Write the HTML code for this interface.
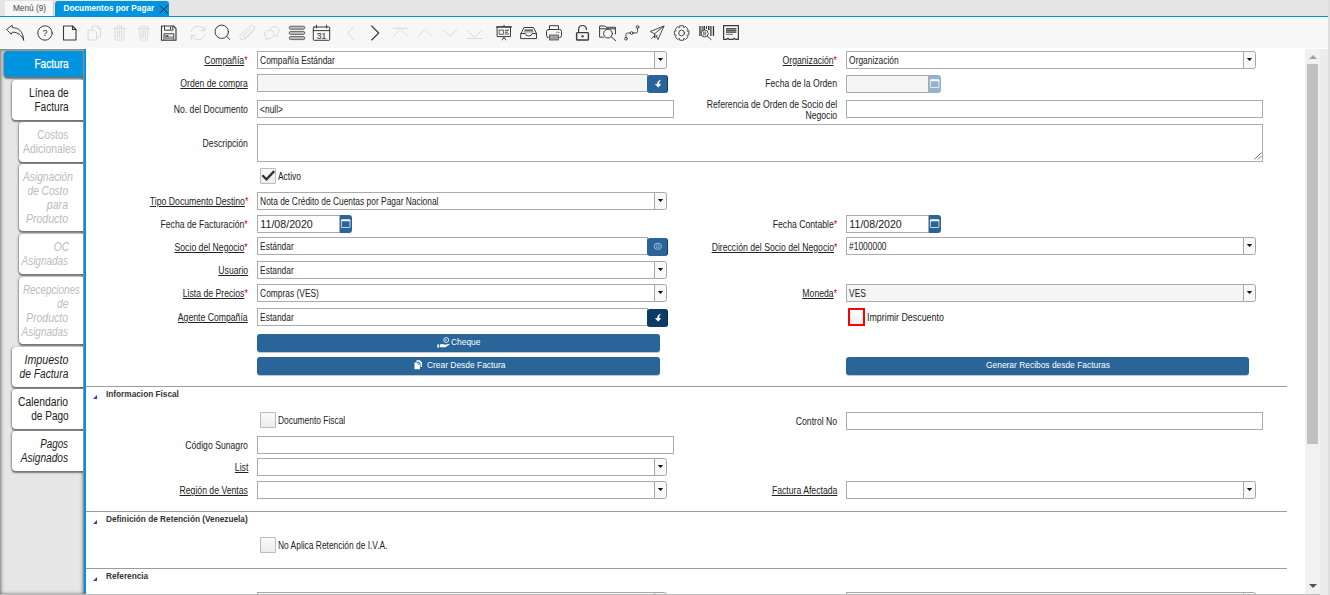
<!DOCTYPE html>
<html lang="es"><head><meta charset="utf-8"><title>Documentos por Pagar</title>
<style>
*{box-sizing:border-box}
html,body{margin:0;padding:0}
body{width:1330px;height:595px;overflow:hidden;background:#fff;position:relative;font-family:"Liberation Sans",sans-serif;color:#333}
.a{position:absolute}
#tabbar{left:0;top:0;width:1330px;height:16px;background:#e5e5e5}
#tabmenu{left:5px;top:1px;width:49px;height:15px;background:#f7f7f7;border-right:1px solid #c8c8c8;font-size:8.25px;line-height:16px;color:#4a4a4a;text-align:center;padding-left:1px}
#tabact{left:55px;top:1px;width:114px;height:16px;background:#0094de;border-radius:3px 3px 0 0;color:#fff;font-weight:bold;font-size:8.25px;line-height:16px;padding-left:8.5px;white-space:nowrap}
#blueline{left:0;top:16px;width:1328px;height:1px;background:#0094de}
#toolbar{left:0;top:17px;width:1328px;height:31px;background:#f7f7f7}
#rstrip{left:1328px;top:0;width:2px;height:595px;background:#dedede}
#side{left:0;top:49px;width:84px;height:546px;background:#e6e6e6;box-shadow:inset 0 0 4px 0 #333;overflow:hidden}
#sideline{left:84px;top:49px;width:2px;height:546px;background:#0094de}
.tab{right:0;background:#fff;border:1px solid #fff;border-right:none;border-radius:4px 0 0 4px;box-shadow:0 2px 1.5px -.5px rgba(0,0,0,.45),-1px 0 2px rgba(0,0,0,.3);font-size:12px;line-height:14px;color:#222;white-space:nowrap}
.tab .ln{position:absolute;display:block;height:14px;transform:scaleX(.86)}
.tab .ln.r{transform-origin:right center}
.tab .ln.l{transform-origin:left center}
.tab.sel{background:#0094de;border-color:#0094de;color:#fff;-webkit-text-stroke:.25px #fff}
.tab.dis{color:#bbb}
.tab.it{font-style:italic}
.tab.it .ln{transform:scaleX(.845)}
#sb{left:1305px;top:49px;width:15px;height:546px;background:#f1f1f1}
#sb2{left:1320px;top:49px;width:8px;height:546px;background:#ececec}
#thumb{left:1307px;top:64px;width:11px;height:380px;background:#c1c1c1}
.lbl{font-size:10.5px;line-height:11px;white-space:nowrap;text-align:right;color:#222;transform:scaleX(.825);transform-origin:right center}
.lbl u{text-decoration:underline;text-underline-offset:1px}
.lbl b{color:#e00;font-weight:normal}
.in{background:#fff;border:1px solid #ababab;height:18px;font-size:10px;line-height:17px;white-space:nowrap;overflow:hidden;color:#222}
.in.ro{background:#f5f5f5}
.in span{display:inline-block;transform:scaleX(.84);transform-origin:left center;padding-left:2.5px}
.in.date{font-size:11.25px;}
.in.date span{transform:scaleX(.945);padding-left:2.5px}
.dd{width:13px;height:18px;border:1px solid #a6a6a6;background:#f8f8f8;border-radius:0 2.5px 2.5px 0}
.dd:after{content:"";position:absolute;left:2.6px;top:5.7px;width:5.8px;height:3.4px;background:#111;clip-path:polygon(0 0,100% 0,50% 100%)}
.bb{width:21px;height:18px;background:#2a6599;border-right:1px solid #0c3a6c;border-radius:3px}
.bb.dk{background:#0d3a66;border-color:#072a4e}
.cal{width:11.6px;height:17.6px;background:#2a6599;border-radius:0 3px 3px 0}
.cal.ro{background:#95b2d0}
.btn{height:17.6px;background:#2a6599;border-radius:3px;color:#fff;font-size:9.5px;line-height:17.6px;text-align:center;white-space:nowrap;box-shadow:0 1px 1px rgba(0,0,0,.25)}
.btn span{display:block;transform:scaleX(.885);transform-origin:left center;line-height:15.2px}
.cb{width:16px;height:16px;border:1px solid #b3bdc6;background:linear-gradient(#fafafa,#ececec);border-radius:1px}
.cbl{font-size:10px;line-height:12px;white-space:nowrap;transform:scaleX(.84);transform-origin:left center;color:#222}
.sep{left:86px;width:1201px;height:1px;background:#9c9c9c}
.gh{left:106px;font-size:8.25px;font-weight:bold;line-height:10px;white-space:nowrap;color:#333}
.tri{left:93px;width:0;height:0;border-left:4.4px solid transparent;border-bottom:4.6px solid #1a45c8}
#botline{left:0;top:594px;width:1320px;height:1px;background:#bdbdbd}
svg.ic{position:absolute;overflow:visible}
</style></head>
<body>
<div class="a" id="tabbar"></div>
<div class="a" id="tabmenu">Menú (9)</div>
<div class="a" id="tabact">Documentos por Pagar<svg class="ic" style="left:104px;top:3.9px" width="9.3" height="8.8" viewBox="0 0 10 10" preserveAspectRatio="none"><path d="M0.5 0.5L9.5 9.5M9.5 0.5L0.5 9.5" stroke="#123" stroke-width="1" fill="none"/></svg></div>
<div class="a" id="toolbar"></div>
<div class="a" id="blueline"></div>
<svg class="ic" style="left:0;top:0" width="760" height="48" viewBox="0 0 760 48"><g stroke="#3a3a3a" stroke-width="1.0" fill="none" stroke-linecap="round" stroke-linejoin="round" ><path d="M6.9 29.2L12.1 25.3L12.6 27.700C18.5 27.600 23.300 31.500 23.700 40.500C22 35.300 18.200 32.300 12.300 32.200L11.400 33.900Z"/></g><g stroke="#3a3a3a" stroke-width="1.0" fill="none" stroke-linecap="round" stroke-linejoin="round" ><circle cx="45" cy="33" r="7.2"/></g><text x="45" y="36.3" font-family="Liberation Sans,sans-serif" font-size="9" text-anchor="middle" fill="#333">?</text><g stroke="#3a3a3a" stroke-width="1.1" fill="none" stroke-linecap="round" stroke-linejoin="round" ><path d="M63.500 26H72.500L76 29.500V40H63.500Z"/><path d="M72.500 26V29.500H76"/></g><g stroke="#d6d6d6" stroke-width="0.9" fill="none" stroke-linecap="round" stroke-linejoin="round" ><path d="M88.500 30H94.500L96.500 32V40H88.500Z"/><path d="M92 30V26H98L100.500 28.500V37H96.500"/><path d="M98 26V28.500H100.500"/></g><g stroke="#d6d6d6" stroke-width="0.9" fill="none" stroke-linecap="round" stroke-linejoin="round" ><path d="M115.0 28.5V38.5Q115.0 40 116.5 40H122.5Q124.0 40 124.0 38.5V28.5"/><path d="M114.0 28.3H125.0"/><path d="M117.5 28V26.6Q117.5 25.8 118.3 25.8H120.7Q121.5 25.8 121.5 26.600V28"/><path d="M117.5 30.5V37.500M119.5 30.500V37.500M121.5 30.500V37.500"/></g><g stroke="#d6d6d6" stroke-width="0.9" fill="none" stroke-linecap="round" stroke-linejoin="round" ><path d="M139.20000000000002 28.6L140.20000000000002 39Q140.3 40 141.3 40H146.3Q147.3 40 147.4 39L148.4 28.600"/><path d="M138.8 28.400Q139.8 26 143.8 26Q147.8 26 148.8 28.400Z"/><path d="M141.8 30.500L142.10000000000002 37.500M143.8 30.500V37.500M145.8 30.500L145.5 37.500"/></g><g stroke="#3a3a3a" stroke-width="1.0" fill="none" stroke-linecap="round" stroke-linejoin="round" ><path d="M161.500 26H173.500L176 28.500V40.200H161.500Z" stroke-width="1.150"/><path d="M164.500 26V30.200H172.800V26" /><path d="M170.500 27V29.200"/><path d="M164 40V33.800H173.800V40"/></g><rect x="164.500" y="36.300" width="8.800" height="3.500" fill="#9a9a9a"/><rect x="165.300" y="35.200" width="3.200" height="1.500" fill="#444"/><g stroke="#d6d6d6" stroke-width="0.9" fill="none" stroke-linecap="round" stroke-linejoin="round" ><path d="M204.500 30.500A7 7 0 0 0 191.300 31.500"/><path d="M204.800 26.500V30.600H200.800"/><path d="M191.500 35.500A7 7 0 0 0 204.700 34.500"/><path d="M191.200 39.500V35.400H195.200"/></g><g stroke="#3a3a3a" stroke-width="1.0" fill="none" stroke-linecap="round" stroke-linejoin="round" ><circle cx="221.750" cy="31.750" r="6.700"/><path d="M226.600 36.500L229.800 39.500"/></g><g stroke="#d6d6d6" stroke-width="0.9" fill="none" stroke-linecap="round" stroke-linejoin="round" ><path d="M253.300 31.200L245 39Q242.700 40.800 240.600 39Q238.800 37 240.800 34.800L250.300 26Q252.400 24.500 254.200 26.200Q255.600 28 254 29.700L245.600 37.500Q244.600 38.300 243.700 37.400Q242.900 36.400 243.900 35.400L251 28.700"/></g><g stroke="#d6d6d6" stroke-width="0.9" fill="none" stroke-linecap="round" stroke-linejoin="round" ><path d="M270 29A4.800 4.200 0 1 1 276.500 34.600L277.500 36.600L274.800 35"/><path d="M264.500 34.200A4.800 4.200 0 1 1 269 38.400L266 39.700L266.300 37.600A4.600 4 0 0 1 264.500 34.200Z"/></g><rect x="289.200" y="26.2" width="15.600" height="3" rx="1.500" fill="#bdbdbd" stroke="#4a4a4a" stroke-width="0.8"/><rect x="289.200" y="31.4" width="15.600" height="3" rx="1.500" fill="#bdbdbd" stroke="#4a4a4a" stroke-width="0.8"/><rect x="289.200" y="36.6" width="15.600" height="3" rx="1.500" fill="#bdbdbd" stroke="#4a4a4a" stroke-width="0.8"/><g stroke="#3a3a3a" stroke-width="1.0" fill="none" stroke-linecap="round" stroke-linejoin="round" ><rect x="313.300" y="27" width="16.400" height="13.300" rx="0.800"/><path d="M313.300 30.600H329.700M316.500 25.200V28M326.500 25.200V28"/></g><text x="321.500" y="38.600" font-family="Liberation Sans,sans-serif" font-size="8.5" text-anchor="middle" fill="#444" stroke="#444" stroke-width=".15">31</text><g stroke="#d6d6d6" stroke-width="0.9" fill="none" stroke-linecap="round" stroke-linejoin="round" ><path d="M354.5 26 L347.6 33 L354.5 40"/></g><g stroke="#3a3a3a" stroke-width="1.1" fill="none" stroke-linecap="round" stroke-linejoin="round" ><path d="M371.6 26 L378.8 33 L371.6 40"/></g><g stroke="#d6d6d6" stroke-width="0.9" fill="none" stroke-linecap="round" stroke-linejoin="round" ><path d="M393 36.5 L400.5 29.2 L408 36.5"/></g><g stroke="#d6d6d6" stroke-width="0.9" fill="none" stroke-linecap="round" stroke-linejoin="round" ><path d="M393 28.2 L408 28.2"/></g><g stroke="#d6d6d6" stroke-width="0.9" fill="none" stroke-linecap="round" stroke-linejoin="round" ><path d="M418 36.5 L425 29.5 L432 36.5"/></g><g stroke="#d6d6d6" stroke-width="0.9" fill="none" stroke-linecap="round" stroke-linejoin="round" ><path d="M443 29.5 L450 36.5 L457 29.5"/></g><g stroke="#d6d6d6" stroke-width="0.9" fill="none" stroke-linecap="round" stroke-linejoin="round" ><path d="M467 30.3 L474.5 37.5 L482 30.3"/></g><g stroke="#d6d6d6" stroke-width="0.9" fill="none" stroke-linecap="round" stroke-linejoin="round" ><path d="M467 38.5 L482 38.5"/></g><g stroke="#3a3a3a" stroke-width="1.0" fill="none" stroke-linecap="round" stroke-linejoin="round" ><path d="M496.500 26.800H511.500" stroke-width="1.300"/><rect x="497.500" y="27" width="13" height="9.600"/><path d="M504 25.300V26.500M504 36.800V38L502 39.800M504 38L506 39.800"/><rect x="499.600" y="30" width="3.800" height="4.300" stroke-width="0.800"/><path d="M505.200 30.300H508.600M505.200 32.200H507.500M505.200 34H508.600" stroke-width="0.900"/></g><g stroke="#3a3a3a" stroke-width="1.0" fill="none" stroke-linecap="round" stroke-linejoin="round" ><path d="M521 33.500L524 27.500H533.500L536.500 33.500V38.600H521Z"/><path d="M521 33.500H525.300Q525.800 36 528.800 36Q531.700 36 532.200 33.500H536.500"/><path d="M525 30.200H532.500" stroke-width="1.300"/><path d="M524.300 31.900H533.200" stroke-width="0.700"/></g><g stroke="#3a3a3a" stroke-width="1.0" fill="none" stroke-linecap="round" stroke-linejoin="round" ><path d="M549.500 29.500V25.700H558.500V29.500"/><rect x="546.500" y="29.500" width="15" height="8" rx="2"/></g><rect x="549.500" y="35" width="9" height="5" fill="#a0a0a0" stroke="#555" stroke-width="0.800"/><rect x="556.300" y="31.800" width="1" height="1" fill="#333"/><rect x="558.300" y="31.800" width="1" height="1" fill="#333"/><g stroke="#3a3a3a" stroke-width="1.0" fill="none" stroke-linecap="round" stroke-linejoin="round" ><rect x="576.600" y="32.600" width="11.800" height="7.400" rx="0.800" stroke-width="1.400"/><path d="M578.600 32.500V29.500Q578.600 25.500 582.500 25.500Q586.400 25.500 586.400 29.500" stroke-width="1.200"/><circle cx="582.500" cy="36.300" r="0.900"/></g><g stroke="#3a3a3a" stroke-width="1.0" fill="none" stroke-linecap="round" stroke-linejoin="round" ><path d="M615.400 34V27.300H606L604.800 26H599.600V37.200H603.500"/><path d="M599.600 28.800H615.400"/><circle cx="608" cy="33.600" r="4.400"/><path d="M611.300 36.800L615.600 40.600"/></g><g stroke="#3a3a3a" stroke-width="0.9" fill="none" stroke-linecap="round" stroke-linejoin="round" ><circle cx="626" cy="38.700" r="1.400"/><circle cx="631.700" cy="33" r="1.400"/><circle cx="637.500" cy="27" r="1.400"/><path d="M626 37.500V34.500Q626 33 627.500 33H630.500M632.900 33H636Q637.500 33 637.500 31.500V28.200"/></g><g stroke="#3a3a3a" stroke-width="0.9" fill="none" stroke-linecap="round" stroke-linejoin="round" ><path d="M664 26L650.200 31.500L654.500 33.800L664 26L658 39.500L655.800 35"/><path d="M654.500 33.800V38L657 35.500"/><path d="M651.500 38.700L654.500 35.700"/></g><g stroke="#3a3a3a" stroke-width="0.9" fill="none" stroke-linecap="round" stroke-linejoin="round" ><path d="M688.87 31.14 L688.87 34.86 L687.12 35.08 L686.98 35.43 L688.05 36.83 L685.43 39.45 L684.03 38.37 L683.68 38.52 L683.46 40.27 L679.74 40.27 L679.52 38.52 L679.17 38.38 L677.77 39.45 L675.15 36.83 L676.23 35.43 L676.08 35.08 L674.33 34.86 L674.33 31.14 L676.08 30.92 L676.22 30.57 L675.15 29.17 L677.77 26.55 L679.17 27.63 L679.52 27.48 L679.74 25.73 L683.46 25.73 L683.68 27.48 L684.03 27.62 L685.43 26.55 L688.05 29.17 L686.97 30.57 L687.12 30.92Z"/><circle cx="681.600" cy="33" r="2.900"/></g><rect x="699.3" y="26" width="1.3" height="10" fill="#333"/><rect x="701.6" y="26" width="1.0" height="10" fill="#333"/><rect x="703.5" y="26" width="1.5" height="4" fill="#333"/><rect x="706" y="26" width="1" height="3" fill="#333"/><rect x="708" y="26" width="1.5" height="4" fill="#333"/><rect x="710.3" y="26" width="1.2" height="10" fill="#333"/><rect x="712.8" y="26" width="1.3" height="10" fill="#333"/><circle cx="704.700" cy="33.500" r="3.500" fill="#f7f7f7" stroke="#3a3a3a" stroke-width="0.900"/><rect x="703.300" y="31.500" width="1.200" height="4" fill="#555"/><rect x="705.300" y="31.500" width="0.800" height="4" fill="#555"/><g stroke="#3a3a3a" stroke-width="0.9" fill="none" stroke-linecap="round" stroke-linejoin="round" ><path d="M707.300 36.200L711.300 39.600"/></g><g stroke="#3a3a3a" stroke-width="1.0" fill="none" stroke-linecap="round" stroke-linejoin="round" ><path d="M723.600 39.300V25.600H738.400V39.300H735.300Q734.200 37.600 733.100 39.300H729Q727.900 37.600 726.800 39.300Z" stroke-width="1.200"/></g><rect x="726" y="28" width="10.300" height="4.800" fill="#999"/><rect x="726" y="28" width="10.300" height="1.100" fill="#555"/><rect x="726" y="29.850" width="10.300" height="1.100" fill="#555"/><rect x="726" y="31.700" width="10.300" height="1.100" fill="#555"/><rect x="726" y="33.800" width="7" height="1" fill="#666"/></svg>
<div class="a" id="side">
<div class="a tab sel" style="top:2.0px;height:26px;left:4px"><span class="ln r" style="top:5px;right:15.5px;transform:scaleX(0.842)">Factura</span></div>
<div class="a tab " style="top:30.8px;height:39.8px;left:12px"><span class="ln r" style="top:5px;right:15.5px;transform:scaleX(0.848)">Línea de</span><span class="ln r" style="top:19px;right:15.5px;transform:scaleX(0.842)">Factura</span></div>
<div class="a tab dis" style="top:72.9px;height:39.8px;left:19px"><span class="ln r" style="top:5px;right:15.5px;transform:scaleX(0.83)">Costos</span><span class="ln l" style="top:19px;left:3.3px;transform:scaleX(0.863)">Adicionales</span></div>
<div class="a tab dis it" style="top:115.1px;height:67.4px;left:19px"><span class="ln l" style="top:5px;left:3.3px;transform:scaleX(0.85)">Asignación</span><span class="ln r" style="top:19px;right:15.5px;transform:scaleX(0.844)">de Costo</span><span class="ln r" style="top:33px;right:15.5px;transform:scaleX(0.883)">para</span><span class="ln r" style="top:47px;right:15.5px;transform:scaleX(0.876)">Producto</span></div>
<div class="a tab dis it" style="top:185.4px;height:39.8px;left:19px"><span class="ln r" style="top:5px;right:15.5px;transform:scaleX(0.85)">OC</span><span class="ln r" style="top:19px;right:15.5px;transform:scaleX(0.83)">Asignadas</span></div>
<div class="a tab dis it" style="top:227.5px;height:67.4px;left:19px"><span class="ln l" style="top:5px;left:3.3px;transform:scaleX(0.82)">Recepciones</span><span class="ln r" style="top:19px;right:15.5px;transform:scaleX(0.85)">de</span><span class="ln r" style="top:33px;right:15.5px;transform:scaleX(0.876)">Producto</span><span class="ln r" style="top:47px;right:15.5px;transform:scaleX(0.83)">Asignadas</span></div>
<div class="a tab it" style="top:297.9px;height:39.8px;left:12px"><span class="ln r" style="top:5px;right:15.5px;transform:scaleX(0.89)">Impuesto</span><span class="ln r" style="top:19px;right:15.5px;transform:scaleX(0.85)">de Factura</span></div>
<div class="a tab " style="top:340.0px;height:39.8px;left:12px"><span class="ln r" style="top:5px;right:15.5px;transform:scaleX(0.862)">Calendario</span><span class="ln r" style="top:19px;right:15.5px;transform:scaleX(0.84)">de Pago</span></div>
<div class="a tab it" style="top:382.1px;height:39.8px;left:12px"><span class="ln r" style="top:5px;right:15.5px;transform:scaleX(0.82)">Pagos</span><span class="ln r" style="top:19px;right:15.5px;transform:scaleX(0.846)">Asignados</span></div>
</div>
<div class="a" style="left:0;top:49px;width:84px;height:2px;background:linear-gradient(#868686,#a2a2a2)"></div>
<div class="a" style="left:83px;top:49px;width:1px;height:546px;background:#8e8e8e"></div>
<div class="a" id="sideline"></div>
<div class="a lbl" style="right:1082.0px;top:55.3px"><u>Compañía</u><b>*</b></div>
<div class="a in " style="left:257px;top:51px;width:398px;height:18px"><span>Compañía Estándar</span></div>
<div class="a dd" style="left:654px;top:51px"></div>
<div class="a lbl" style="right:1082.0px;top:78.3px"><u>Orden de compra</u></div>
<div class="a in ro" style="left:257px;top:74px;width:391px;height:18px"><span></span></div>
<div class="a bb" style="left:647px;top:75px"><svg class="ic" style="left:0;top:0" width="21" height="18" viewBox="0 0 21 18"><path d="M14.6 4.6C11.3 5.2 10 7.300 10.200 9.200L7.700 9L11.200 12.500L14.300 9.300L12.300 9.300C12 7.500 12.600 5.900 14.600 4.600Z" fill="#fff"/></svg></div>
<div class="a lbl" style="right:1082.0px;top:103.8px">No. del Documento</div>
<div class="a in " style="left:257px;top:100px;width:417px;height:18px"><span>&lt;null&gt;</span></div>
<div class="a lbl" style="right:1082.0px;top:137.8px">Descripción</div>
<div class="a in " style="left:257px;top:124px;width:1006px;height:38px"><span></span></div>
<div class="a lbl" style="right:1082.0px;top:196.3px"><u>Tipo Documento Destino</u><b>*</b></div>
<div class="a in " style="left:257px;top:192px;width:398px;height:18px"><span>Nota de Crédito de Cuentas por Pagar Nacional</span></div>
<div class="a dd" style="left:654px;top:192px"></div>
<div class="a lbl" style="right:1082.0px;top:219.3px">Fecha de Facturación<b>*</b></div>
<div class="a lbl" style="right:1082.0px;top:241.8px"><u>Socio del Negocio</u><b>*</b></div>
<div class="a in " style="left:257px;top:237px;width:391px;height:18px"><span>Estándar</span></div>
<div class="a bb" style="left:647px;top:238px"><svg class="ic" style="left:0;top:0" width="21" height="18" viewBox="0 0 21 18" fill="none" stroke="#a9c3dd" stroke-width="0.9"><ellipse cx="10.800" cy="8.300" rx="3.700" ry="3.100"/><rect x="9.300" y="6.900" width="3" height="2.800" rx="0.500" stroke-width="0.700"/></svg></div>
<div class="a lbl" style="right:1082.0px;top:265.3px"><u>Usuario</u></div>
<div class="a in " style="left:257px;top:261px;width:398px;height:18px"><span>Estandar</span></div>
<div class="a dd" style="left:654px;top:261px"></div>
<div class="a lbl" style="right:1082.0px;top:288.3px"><u>Lista de Precios</u><b>*</b></div>
<div class="a in " style="left:257px;top:284px;width:398px;height:18px"><span>Compras (VES)</span></div>
<div class="a dd" style="left:654px;top:284px"></div>
<div class="a lbl" style="right:1082.0px;top:312.3px"><u>Agente Compañía</u></div>
<div class="a in " style="left:257px;top:308px;width:391px;height:18px"><span>Estandar</span></div>
<div class="a bb dk" style="left:647px;top:309px"><svg class="ic" style="left:0;top:0" width="21" height="18" viewBox="0 0 21 18"><path d="M14.6 4.6C11.3 5.2 10 7.300 10.200 9.200L7.700 9L11.200 12.500L14.300 9.300L12.300 9.300C12 7.500 12.600 5.900 14.600 4.600Z" fill="#fff"/></svg></div>
<div class="a in date " style="left:257px;top:215px;width:83px;height:18px"><span>11/08/2020</span></div>
<div class="a cal " style="left:340px;top:215px"><svg class="ic" style="left:0.8px;top:4.2px" width="9.4" height="9" viewBox="0 0 9.4 9" fill="none" stroke="#fff" stroke-width="0.8"><rect x="0.4" y="0.6" width="8.6" height="7.900" rx="0.5" stroke-opacity=".92"/><path d="M0.400 1.500H9" stroke-width="1.600" stroke-opacity=".9"/></svg></div>
<div class="a in date ro" style="left:846px;top:75px;width:83px;height:18px"><span></span></div>
<div class="a cal ro" style="left:929px;top:75px"><svg class="ic" style="left:0.8px;top:4.2px" width="9.4" height="9" viewBox="0 0 9.4 9" fill="none" stroke="#fff" stroke-width="0.8"><rect x="0.4" y="0.6" width="8.6" height="7.900" rx="0.5" stroke-opacity=".92"/><path d="M0.400 1.500H9" stroke-width="1.600" stroke-opacity=".9"/></svg></div>
<div class="a in date " style="left:846px;top:215px;width:83px;height:18px"><span>11/08/2020</span></div>
<div class="a cal " style="left:929px;top:215px"><svg class="ic" style="left:0.8px;top:4.2px" width="9.4" height="9" viewBox="0 0 9.4 9" fill="none" stroke="#fff" stroke-width="0.8"><rect x="0.4" y="0.6" width="8.6" height="7.900" rx="0.5" stroke-opacity=".92"/><path d="M0.400 1.500H9" stroke-width="1.600" stroke-opacity=".9"/></svg></div>
<div class="a lbl" style="right:492.6px;top:55.3px"><u>Organización</u><b>*</b></div>
<div class="a in " style="left:846px;top:51px;width:398px;height:18px"><span>Organización</span></div>
<div class="a dd" style="left:1243px;top:51px"></div>
<div class="a lbl" style="right:492.6px;top:78.3px">Fecha de la Orden</div>
<div class="a lbl" style="right:492.6px;top:98.8px">Referencia de Orden de Socio del<br>Negocio</div>
<div class="a in " style="left:846px;top:100px;width:417px;height:18px"><span></span></div>
<div class="a lbl" style="right:492.6px;top:219.3px">Fecha Contable<b>*</b></div>
<div class="a lbl" style="right:492.6px;top:241.8px"><u>Dirección del Socio del Negocio</u><b>*</b></div>
<div class="a in " style="left:846px;top:237px;width:398px;height:18px"><span>#1000000</span></div>
<div class="a dd" style="left:1243px;top:237px"></div>
<div class="a lbl" style="right:492.6px;top:288.3px"><u>Moneda</u><b>*</b></div>
<div class="a in ro" style="left:846px;top:284px;width:398px;height:18px"><span>VES</span></div>
<div class="a dd" style="left:1243px;top:284px"></div>
<div class="a cb" style="left:260px;top:168px"><svg class="ic" style="left:-1px;top:-1px" width="16" height="16" viewBox="0 0 16 16"><path d="M2.300 7.200L6.500 11.400L14.200 3.100" fill="none" stroke="#333" stroke-width="2.300"/></svg></div>
<div class="a cbl" style="left:278px;top:171px">Activo</div>
<div class="a cb" style="left:848px;top:308px;width:17px;height:18px;border:2px solid #f00;border-radius:0;background:linear-gradient(#fff,#eee)"></div>
<div class="a cbl" style="left:867px;top:312.3px;transform:scaleX(.886)">Imprimir Descuento</div>
<div class="a cb" style="left:260px;top:412px"></div>
<div class="a cbl" style="left:278px;top:415px">Documento Fiscal</div>
<div class="a cb" style="left:260px;top:537px"></div>
<div class="a cbl" style="left:278px;top:540px">No Aplica Retención de I.V.A.</div>
<div class="a btn" style="left:257px;top:334px;width:403px"><svg class="ic" style="left:180px;top:2.6px" width="13" height="11" viewBox="0 0 13 11"><circle cx="9.200" cy="3" r="2.500" fill="none" stroke="#fff" stroke-width="0.800"/><path d="M8.600 2V4M9.600 2.200V3.800" stroke="#fff" stroke-width="0.500"/><path d="M0.300 7.500H2V10.500H0.300ZM2.800 7.600L5.500 7L8.500 7.800L12.300 6.800L12.600 7.600L8.500 10.300L2.800 10.200Z" fill="#fff"/></svg><span class="a" style="left:194.39999999999998px;top:0">Cheque</span></div>
<div class="a btn" style="left:257px;top:357px;width:403px"><svg class="ic" style="left:156.500px;top:2.800px" width="8.5" height="9.5" viewBox="0 0 9 10"><path d="M2.500 0.300H6.300L8.500 2.500V7.500H7V3.800L5 1.800H2.500Z" fill="#fff"/><path d="M0.500 2.500H4.300L6.300 4.500V9.700H0.500Z" fill="#fff"/><path d="M4.100 2.700V4.700H6.100" stroke="#2a6599" stroke-width="0.600" fill="none"/></svg><span class="a" style="left:169.8px;top:0">Crear Desde Factura</span></div>
<div class="a btn" style="left:846px;top:357px;width:403px"><span class="a" style="left:139.70000000000005px;top:0">Generar Recibos desde Facturas</span></div>
<div class="a sep" style="top:386px"></div>
<div class="a tri" style="top:394.6px"></div>
<div class="a gh" style="top:390px">Informacion Fiscal</div>
<div class="a sep" style="top:511px"></div>
<div class="a tri" style="top:519.6px"></div>
<div class="a gh" style="top:515px">Definición de Retención (Venezuela)</div>
<div class="a sep" style="top:568px"></div>
<div class="a tri" style="top:576.6px"></div>
<div class="a gh" style="top:572px">Referencia</div>
<div class="a lbl" style="right:1082.0px;top:440.3px">Código Sunagro</div>
<div class="a in " style="left:257px;top:436px;width:417px;height:18px"><span></span></div>
<div class="a lbl" style="right:1082.0px;top:462.3px"><u>List</u></div>
<div class="a in " style="left:257px;top:458px;width:398px;height:18px"><span></span></div>
<div class="a dd" style="left:654px;top:458px"></div>
<div class="a lbl" style="right:1082.0px;top:485.3px"><u>Región de Ventas</u></div>
<div class="a in " style="left:257px;top:481px;width:398px;height:18px"><span></span></div>
<div class="a dd" style="left:654px;top:481px"></div>
<div class="a lbl" style="right:492.6px;top:415.8px">Control No</div>
<div class="a in " style="left:846px;top:412px;width:417px;height:18px"><span></span></div>
<div class="a lbl" style="right:492.6px;top:485.3px"><u>Factura Afectada</u></div>
<div class="a in " style="left:846px;top:481px;width:398px;height:18px"><span></span></div>
<div class="a dd" style="left:1243px;top:481px"></div>
<div class="a in ro" style="left:257px;top:592px;width:398px;height:18px"><span></span></div>
<div class="a dd" style="left:654px;top:592px"></div>
<div class="a in ro" style="left:846px;top:592px;width:398px;height:18px"><span></span></div>
<div class="a dd" style="left:1243px;top:592px"></div>
<svg class="ic" style="left:1254px;top:152px" width="8" height="8" viewBox="0 0 8 8"><path d="M0.500 7.500L7.500 0.500M4 7.500L7.500 4" stroke="#555" stroke-width="0.800" fill="none"/></svg>
<div class="a" id="sb"></div><div class="a" id="sb2"></div><div class="a" id="thumb"></div>
<svg class="ic" style="left:1309px;top:55px" width="8" height="4" viewBox="0 0 8 4"><path d="M0 4L4 0L8 4Z" fill="#a3a3a3"/></svg>
<svg class="ic" style="left:1309px;top:584px" width="8" height="4" viewBox="0 0 8 4"><path d="M0 0L4 4L8 0Z" fill="#505050"/></svg>
<div class="a" id="botline"></div>
<div class="a" id="rstrip"></div>
</body></html>
